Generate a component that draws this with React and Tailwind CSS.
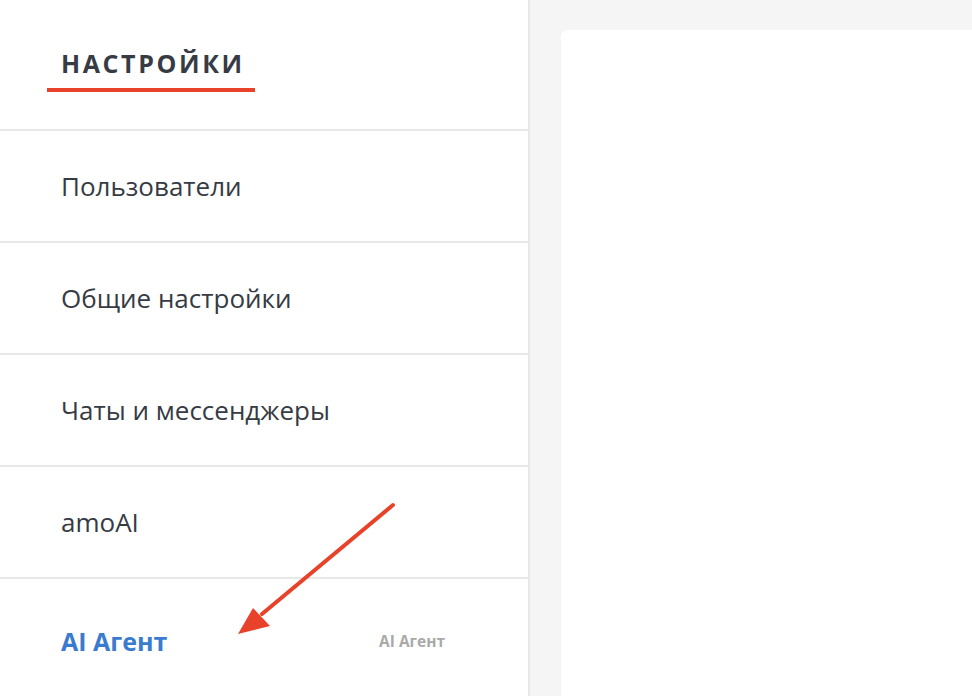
import React from 'react';

const items = ['Пользователи', 'Общие настройки', 'Чаты и мессенджеры', 'amoAI'];

const Arrow = () => (
  <svg className="absolute left-0 top-0 pointer-events-none" width="972" height="696">
    <line x1="393" y1="505" x2="262" y2="614" stroke="#e8432a" strokeWidth="4" strokeLinecap="round" />
    <polygon points="238,634 253,608 270,626" fill="#e8432a" />
  </svg>
);

export default function App() {
  return (
    <div
      className="relative w-[972px] h-[696px] overflow-hidden flex bg-[#f5f5f5]"
      style={{ fontFamily: '"Open Sans", "Noto Sans", sans-serif' }}
    >
      {/* Sidebar */}
      <div className="w-[530px] h-full bg-white border-r-2 border-[#e8e8e8] flex flex-col overflow-hidden">
        <div className="h-[131px] shrink-0 border-b-2 border-[#e8e8e8] pl-[47px] pt-[47px]">
          <div className="inline-block pl-[14px] pr-[10px] pb-[9px] border-b-4 border-[#e8432a]">
            <h1 className="text-[25px] leading-[32px] font-bold tracking-[2.6px] text-[#363b44]">НАСТРОЙКИ</h1>
          </div>
        </div>
        {items.map((t) => (
          <div key={t} className="h-[112px] shrink-0 border-b-2 border-[#e8e8e8] flex items-center pl-[61px]">
            <span className="text-[26px] text-[#363b44]">{t}</span>
          </div>
        ))}
        <div className="h-[126px] shrink-0 flex items-center pl-[61px] pr-[83px] justify-between">
          <span className="text-[25px] font-bold text-[#3a7bd0]">AI Агент</span>
          <span className="text-[15.5px] font-bold text-[#a9a9a9]">AI Агент</span>
        </div>
      </div>

      {/* Content */}
      <div className="flex-1 pt-[30px] pl-[31px]">
        <div className="w-full h-full bg-white rounded-tl-[6px]" />
      </div>

      <Arrow />
    </div>
  );
}
